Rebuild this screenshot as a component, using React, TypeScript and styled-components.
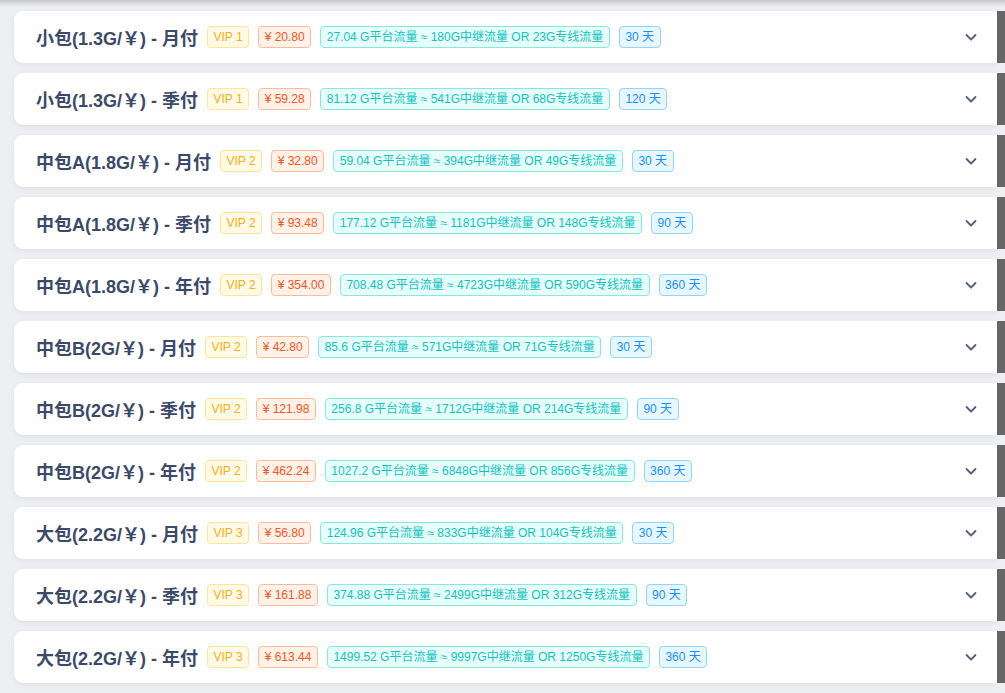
import React from "react";
import styled, { createGlobalStyle } from "styled-components";

const Global = createGlobalStyle`
  html, body { margin: 0; padding: 0; background: #eeeff3; }
  body { font-family: "Liberation Sans", "Noto Sans CJK SC", Arial, sans-serif; overflow: hidden; }
`;

const Page = styled.div`
  position: relative;
  height: 693px;
  padding: 11px 0 0 14px;
  box-sizing: border-box;
  display: flex;
  flex-direction: column;
  gap: 10px;
  &::before {
    content: "";
    position: absolute;
    left: 0;
    right: 0;
    top: 0;
    height: 7px;
    background: linear-gradient(to bottom, rgba(0, 0, 0, 0.16), rgba(0, 0, 0, 0));
  }
`;

const Row = styled.div`
  display: flex;
  height: 52px;
  flex-shrink: 0;
`;

const Card = styled.div`
  flex: 1;
  display: flex;
  align-items: center;
  gap: 8px;
  padding: 0 20px 0 22px;
  background: #fff;
  border-radius: 9px 0 0 9px;
  box-shadow: 0 2px 6px rgba(0, 0, 0, 0.06);
`;

const Strip = styled.div`
  width: 8px;
  background: #666666;
`;

const Title = styled.span`
  font-size: 18px;
  font-weight: bold;
  color: #3b4a69;
  white-space: nowrap;
`;

type Tone = "gold" | "volcano" | "cyan" | "blue";

const tones: Record<Tone, { bg: string; bd: string; fg: string }> = {
  gold: { bg: "#fffbe6", bd: "#ffe58f", fg: "#faad14" },
  volcano: { bg: "#fff2e8", bd: "#ffbb96", fg: "#fa541c" },
  cyan: { bg: "#e6fffb", bd: "#87e8de", fg: "#13c2c2" },
  blue: { bg: "#e6f7ff", bd: "#91d5ff", fg: "#1890ff" },
};

const Tag = styled.span<{ $tone: Tone }>`
  display: inline-block;
  height: 22px;
  line-height: 20px;
  box-sizing: border-box;
  padding: 0 5.5px;
  font-size: 12px;
  border-radius: 4px;
  white-space: nowrap;
  background: ${(p) => tones[p.$tone].bg};
  border: 1px solid ${(p) => tones[p.$tone].bd};
  color: ${(p) => tones[p.$tone].fg};
  margin-left: 1px;
`;

const Chevron = styled.svg`
  margin-left: auto;
  width: 12px;
  height: 12px;
  color: #56607a;
`;

type Plan = {
  title: string;
  vip: string;
  price: string;
  traffic: string;
  days: string;
};

const plans: Plan[] = [
  { title: "小包(1.3G/￥) - 月付", vip: "VIP 1", price: "¥ 20.80", traffic: "27.04 G平台流量 ≈ 180G中继流量 OR 23G专线流量", days: "30 天" },
  { title: "小包(1.3G/￥) - 季付", vip: "VIP 1", price: "¥ 59.28", traffic: "81.12 G平台流量 ≈ 541G中继流量 OR 68G专线流量", days: "120 天" },
  { title: "中包A(1.8G/￥) - 月付", vip: "VIP 2", price: "¥ 32.80", traffic: "59.04 G平台流量 ≈ 394G中继流量 OR 49G专线流量", days: "30 天" },
  { title: "中包A(1.8G/￥) - 季付", vip: "VIP 2", price: "¥ 93.48", traffic: "177.12 G平台流量 ≈ 1181G中继流量 OR 148G专线流量", days: "90 天" },
  { title: "中包A(1.8G/￥) - 年付", vip: "VIP 2", price: "¥ 354.00", traffic: "708.48 G平台流量 ≈ 4723G中继流量 OR 590G专线流量", days: "360 天" },
  { title: "中包B(2G/￥) - 月付", vip: "VIP 2", price: "¥ 42.80", traffic: "85.6 G平台流量 ≈ 571G中继流量 OR 71G专线流量", days: "30 天" },
  { title: "中包B(2G/￥) - 季付", vip: "VIP 2", price: "¥ 121.98", traffic: "256.8 G平台流量 ≈ 1712G中继流量 OR 214G专线流量", days: "90 天" },
  { title: "中包B(2G/￥) - 年付", vip: "VIP 2", price: "¥ 462.24", traffic: "1027.2 G平台流量 ≈ 6848G中继流量 OR 856G专线流量", days: "360 天" },
  { title: "大包(2.2G/￥) - 月付", vip: "VIP 3", price: "¥ 56.80", traffic: "124.96 G平台流量 ≈ 833G中继流量 OR 104G专线流量", days: "30 天" },
  { title: "大包(2.2G/￥) - 季付", vip: "VIP 3", price: "¥ 161.88", traffic: "374.88 G平台流量 ≈ 2499G中继流量 OR 312G专线流量", days: "90 天" },
  { title: "大包(2.2G/￥) - 年付", vip: "VIP 3", price: "¥ 613.44", traffic: "1499.52 G平台流量 ≈ 9997G中继流量 OR 1250G专线流量", days: "360 天" },
];

export default function App() {
  return (
    <>
      <Global />
      <Page>
        {plans.map((p) => (
          <Row key={p.title}>
            <Card>
              <Title>{p.title}</Title>
              <Tag $tone="gold">{p.vip}</Tag>
              <Tag $tone="volcano">{p.price}</Tag>
              <Tag $tone="cyan">{p.traffic}</Tag>
              <Tag $tone="blue">{p.days}</Tag>
              <Chevron viewBox="0 0 12 12" fill="none">
                <path d="M1.5 4 L6 8.5 L10.5 4" stroke="currentColor" strokeWidth="1.8" strokeLinecap="round" strokeLinejoin="round" />
              </Chevron>
            </Card>
            <Strip />
          </Row>
        ))}
      </Page>
    </>
  );
}
